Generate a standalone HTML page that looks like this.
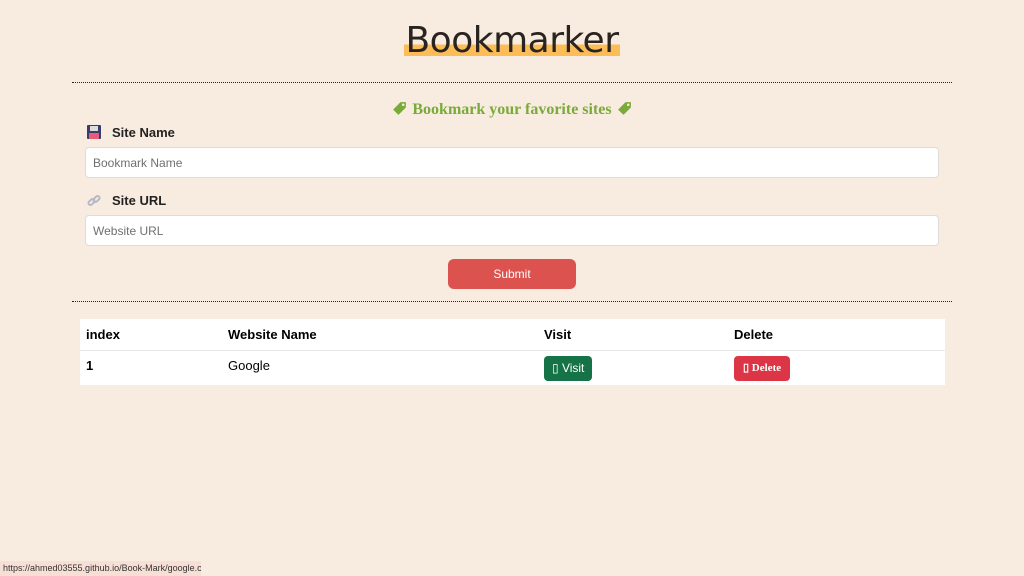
<!DOCTYPE html>
<html><head><meta charset="utf-8"><style>
*{box-sizing:border-box;margin:0;padding:0}
body{width:1024px;height:576px;background:#f8ebdf;font-family:"Liberation Sans",sans-serif;position:relative;overflow:hidden;color:#212529}
.title{position:absolute;left:0;width:1024px;top:20px;text-align:center;font-family:"DejaVu Sans",sans-serif;font-size:36px;color:#2a2420;letter-spacing:-0.5px}
.title span{background:linear-gradient(transparent 60%,#fcbc58 60%,#fcbc58 88%,transparent 88%);padding:0 1px}
.hr{position:absolute;left:72px;width:880px;border-top:1px dotted #222;height:0}
.sub{position:absolute;top:100px;left:0;width:1024px;text-align:center;font-family:"Liberation Serif",serif;font-weight:bold;font-size:16px;color:#7aab3a}
.lbl{position:absolute;left:112px;font-weight:bold;font-size:13px;color:#222}
.ico{position:absolute;left:87px}
.inp{position:absolute;left:85px;width:854px;height:31px;background:#fff;border:1px solid #dcdcdc;border-radius:4px;font-size:12px;color:#707070;padding:8px 7px}
.btn{position:absolute;left:448px;top:259px;width:128px;height:30px;background:#dc524e;border-radius:6px;color:#fff;font-size:12px;text-align:center;line-height:30px}
table{position:absolute;left:80px;top:319px;width:865px;background:#fff;border-collapse:collapse;font-size:13px;color:#000}
th{text-align:left;height:31px;padding:0 6px;border-bottom:1px solid #e8e8e8}
td{height:35px;padding:0 6px;vertical-align:top;padding-top:7px}
.v{display:inline-block;background:#157347;color:#fff;border-radius:4px;padding:0 8px;height:25px;line-height:25px;font-size:12px;margin-top:-2px}
.d{display:inline-block;background:#dc3545;color:#fff;border-radius:4px;padding:0 9px;height:25px;line-height:25px;font-size:11px;font-weight:bold;font-family:"Liberation Serif",serif;margin-top:-2px}
.status{position:absolute;left:0;top:561px;height:15px;width:201px;background:#f7dfd6;font-size:9px;color:#333;padding:2px 3px;white-space:nowrap;overflow:hidden}
</style></head><body>
<div class="title"><span>Bookmarker</span></div>
<div class="hr" style="top:82px"></div>
<div class="sub"><svg width="17" height="17" viewBox="0 0 16 16" style="vertical-align:-3px"><path d="M2 9L9 2h5v5l-7 7z" fill="#7aab3a"/><circle cx="11.5" cy="4.5" r="1.2" fill="#f8ebdf"/></svg> Bookmark your favorite sites <svg width="17" height="17" viewBox="0 0 16 16" style="vertical-align:-3px"><path d="M2 9L9 2h5v5l-7 7z" fill="#7aab3a"/><circle cx="11.5" cy="4.5" r="1.2" fill="#f8ebdf"/></svg></div>
<svg class="ico" style="top:125px" width="14" height="14" viewBox="0 0 14 14"><rect x="0" y="0" width="14" height="14" rx="1" fill="#3a3d6b"/><rect x="3" y="1" width="8" height="5" fill="#ddd"/><rect x="2" y="8" width="10" height="6" fill="#e85b7a"/></svg>
<div class="lbl" style="top:125px">Site Name</div>
<div class="inp" style="top:147px">Bookmark Name</div>
<svg class="ico" style="top:194px" width="14" height="14" viewBox="0 0 14 14"><g fill="none" stroke="#b8b8c8" stroke-width="2"><rect x="1" y="6" width="7" height="4" rx="2" transform="rotate(-45 4.5 8)"/><rect x="6" y="3" width="7" height="4" rx="2" transform="rotate(-45 9.5 5)"/></g></svg>
<div class="lbl" style="top:193px">Site URL</div>
<div class="inp" style="top:215px">Website URL</div>
<div class="btn">Submit</div>
<div class="hr" style="top:301px"></div>
<table>
<tr><th style="width:142px">index</th><th style="width:316px">Website Name</th><th style="width:190px">Visit</th><th>Delete</th></tr>
<tr><td style="font-weight:bold">1</td><td>Google</td><td><span class="v">▯ Visit</span></td><td><span class="d">▯ Delete</span></td></tr>
</table>
<div class="status">https://ahmed03555.github.io/Book-Mark/google.com</div>
</body></html>
